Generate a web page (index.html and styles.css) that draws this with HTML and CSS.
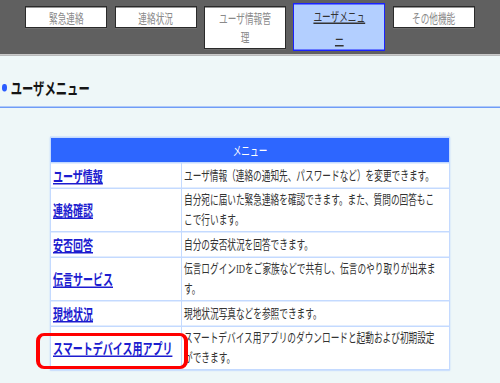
FILE: index.html
```html
<!DOCTYPE html>
<html lang="ja">
<head>
<meta charset="utf-8">
<title>ユーザメニュー</title>
<link rel="stylesheet" href="styles.css">
</head>
<body>
<div class="page">
  <header class="topbar">
    <nav class="tabs">
      <a class="tab">緊急連絡</a>
      <a class="tab">連絡状況</a>
      <a class="tab">ユーザ情報管理</a>
      <a class="tab tab-active">ユーザメニュー</a>
      <a class="tab">その他機能</a>
    </nav>
  </header>
  <main class="content">
    <h1 class="title"><span class="dot"></span>ユーザメニュー</h1>
    <table class="menu">
      <colgroup><col class="col-name"><col class="col-desc"></colgroup>
      <thead>
        <tr><th colspan="2">メニュー</th></tr>
      </thead>
      <tbody>
        <tr><td class="name"><a href="#">ユーザ情報</a></td><td class="desc">ユーザ情報（連絡の通知先、パスワードなど）を変更できます。</td></tr>
        <tr><td class="name"><a href="#">連絡確認</a></td><td class="desc">自分宛に届いた緊急連絡を確認できます。また、質問の回答もここで行います。</td></tr>
        <tr><td class="name"><a href="#">安否回答</a></td><td class="desc">自分の安否状況を回答できます。</td></tr>
        <tr><td class="name"><a href="#">伝言サービス</a></td><td class="desc">伝言ログインIDをご家族などで共有し、伝言のやり取りが出来ます。</td></tr>
        <tr><td class="name"><a href="#">現地状況</a></td><td class="desc">現地状況写真などを参照できます。</td></tr>
        <tr><td class="name marked"><a href="#">スマートデバイス用アプリ</a><span class="mark"></span></td><td class="desc">スマートデバイス用アプリのダウンロードと起動および初期設定ができます。</td></tr>
      </tbody>
    </table>
  </main>
</div>
</body>
</html>
```
FILE: styles.css
```css
html {
  overflow: hidden;
  background: #eef7f8;
}

body {
  margin: 0;
  padding: 0;
  min-height: 383px;
  background: #eef7f8;
}

/* The page is drawn horizontally condensed (2:3), as in the reference:
   zoom shrinks the layout to 500px, scaleY restores the full height. */
.page {
  width: 750px;
  zoom: 0.6667;
  transform: scaleY(1.5);
  transform-origin: 0 0;
  font-family: "Noto Sans CJK JP", sans-serif;
  color: #333;
}

.topbar {
  height: 54px;
  background: #606060;
  border-bottom: 1px solid #c9c9c9;
}

.tabs {
  display: flex;
  align-items: flex-start;
  gap: 11px;
  padding: 3px 0 0 38px;
}

.tab {
  box-sizing: border-box;
  width: 123px;
  margin-top: 3px;
  padding: 0 16px;
  background: #fff;
  border: 1px solid #2a2a2a;
  color: #8a8a8a;
  font-size: 13px;
  line-height: 20px;
  text-align: center;
}

.tab-active {
  width: 138px;
  margin-top: 0;
  padding: 0 24px 1px;
  background: #b3cfff;
  border: 2px solid #1a22ff;
  color: #333;
  line-height: 22px;
  text-decoration: underline;
}

.content {
  padding-top: 20px;
}

.title {
  display: flex;
  align-items: center;
  gap: 6px;
  margin: 0;
  padding: 0 0 7px 3px;
  border-bottom: 2px solid #6f9cf7;
  font-size: 17px;
  line-height: 24px;
  font-weight: bold;
  color: #151515;
}

.dot {
  width: 7px;
  height: 7px;
  border-radius: 50%;
  background: #2a5cff;
}

.menu {
  width: 600px;
  margin: 29px 0 0 75px;
  table-layout: fixed;
  border-spacing: 2px;
  background: #c4daff;
  box-shadow: 0 0 2px rgba(150, 190, 255, 0.6);
  font-family: "Liberation Serif", "Noto Sans CJK JP", serif;
}

.col-name {
  width: 195px;
}

.menu th {
  padding: 2px;
  background: #2d66ff;
  color: #fff;
  font-weight: normal;
  font-size: 13px;
  line-height: 20px;
}

.menu td {
  background: #fff;
  line-height: 20px;
  vertical-align: middle;
}

.name {
  padding: 2px 3px 1px;
  font-size: 15px;
  font-weight: bold;
}

.name a {
  color: #1c1ccf;
  text-decoration: underline;
}

.desc {
  padding: 2px 10px 1px 3px;
  font-size: 13px;
  color: #333;
}

.marked {
  position: relative;
}

.mark {
  position: absolute;
  top: 6px;
  bottom: 1px;
  left: -22px;
  right: -11px;
  border-style: solid;
  border-color: #f00;
  border-width: 4px 6px;
  border-radius: 12px / 8px;
  pointer-events: none;
}
```
